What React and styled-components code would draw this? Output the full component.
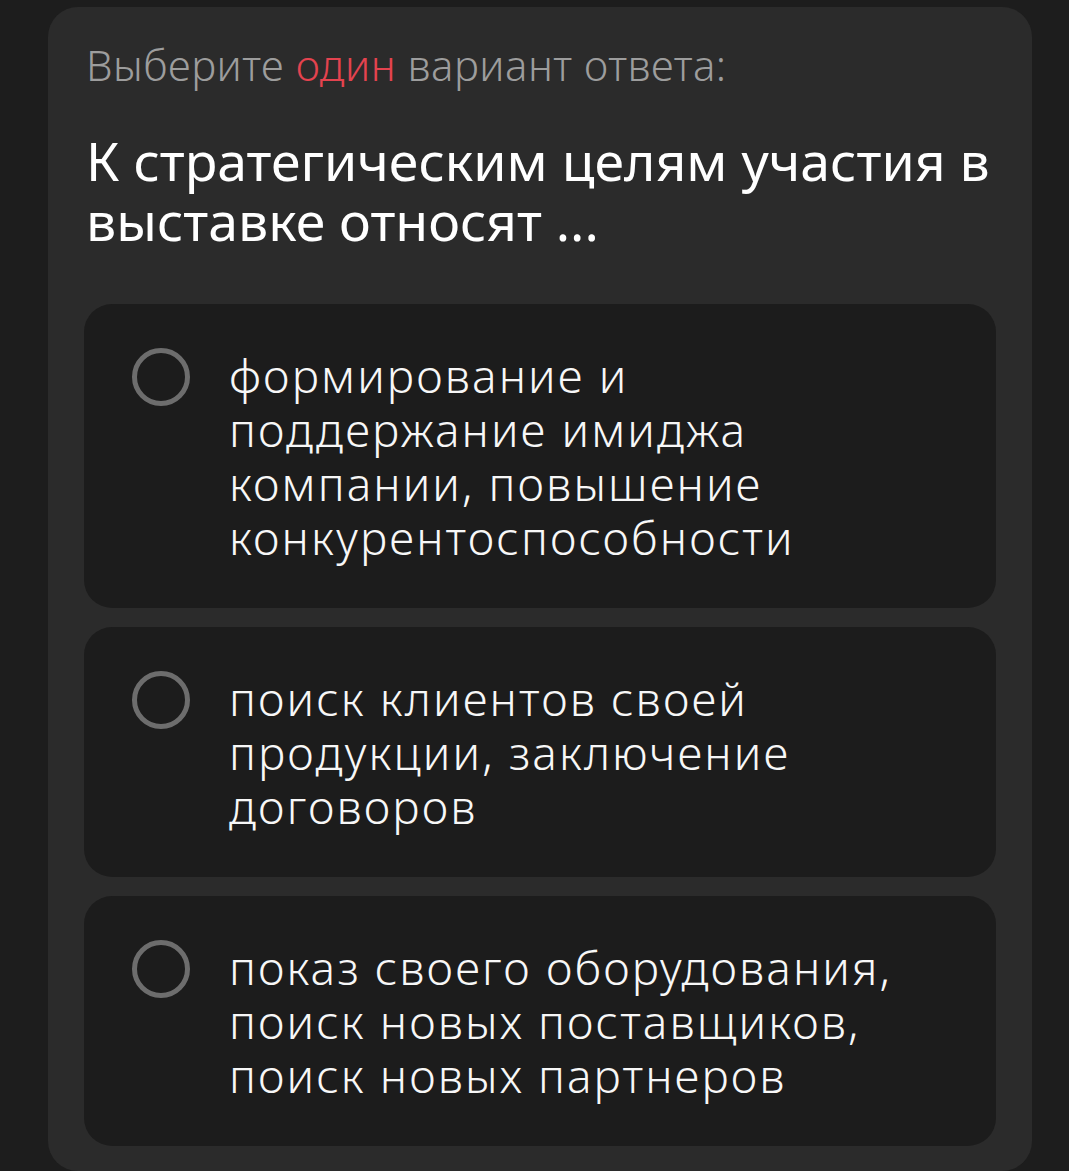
import React from 'react'
import styled, { createGlobalStyle } from 'styled-components'

const GlobalStyle = createGlobalStyle`
  html, body {
    margin: 0;
    padding: 0;
    background: #1d1d1d;
  }
  body {
    font-family: "Noto Sans", "DejaVu Sans", sans-serif;
    -webkit-font-smoothing: antialiased;
  }
`;

const answers = [
  ['формирование и', 'поддержание имиджа', 'компании, повышение', 'конкурентоспособности'],
  ['поиск клиентов своей', 'продукции, заключение', 'договоров'],
  ['показ своего оборудования,', 'поиск новых поставщиков,', 'поиск новых партнеров'],
];

const App = () => {
  return (
    <>
      <GlobalStyle />
      <Card>
        <Hint>
          Выберите <Accent>один</Accent> вариант ответа:
        </Hint>
        <Question>
          <span>К стратегическим целям участия в</span>
          <span>выставке относят ...</span>
        </Question>
        <Options>
          {answers.map((lines, i) => (
            <Option key={i}>
              <Radio />
              <OptionText>
                {lines.map((line, j) => (
                  <span key={j}>{line}</span>
                ))}
              </OptionText>
            </Option>
          ))}
        </Options>
      </Card>
    </>
  )
}

const Card = styled.div`
  width: 984px;
  margin: 7px 0 0 48px;
  padding: 34px 36px 25px;
  box-sizing: border-box;
  background: #2b2b2b;
  border-radius: 30px;
`;

const Hint = styled.p`
  margin: 0 0 0 2px;
  font-size: 42px;
  font-weight: 300;
  line-height: 48px;
  letter-spacing: 0.5px;
  color: #9d9d9d;
  white-space: nowrap;
`;

const Accent = styled.span`
  color: #e4434f;
`;

const Question = styled.h2`
  margin: 42px 0 0 2px;
  font-size: 53.6px;
  font-weight: 400;
  line-height: 60px;
  color: #ffffff;
  span {
    display: block;
    white-space: nowrap;
  }
`;

const Options = styled.div`
  display: flex;
  flex-direction: column;
  gap: 19px;
  margin-top: 53px;
`;

const Option = styled.div`
  display: flex;
  align-items: flex-start;
  gap: 39px;
  padding: 44px 40px 44px 48px;
  background: #1c1c1c;
  border-radius: 28px;
`;

const Radio = styled.span`
  flex-shrink: 0;
  width: 58px;
  height: 58px;
  box-sizing: border-box;
  border: 5px solid #6d6d6d;
  border-radius: 50%;
`;

const OptionText = styled.div`
  font-size: 46px;
  font-weight: 300;
  line-height: 54px;
  letter-spacing: 2.1px;
  color: #f7f7f7;
  span {
    display: block;
    white-space: nowrap;
  }
`;

export default App
